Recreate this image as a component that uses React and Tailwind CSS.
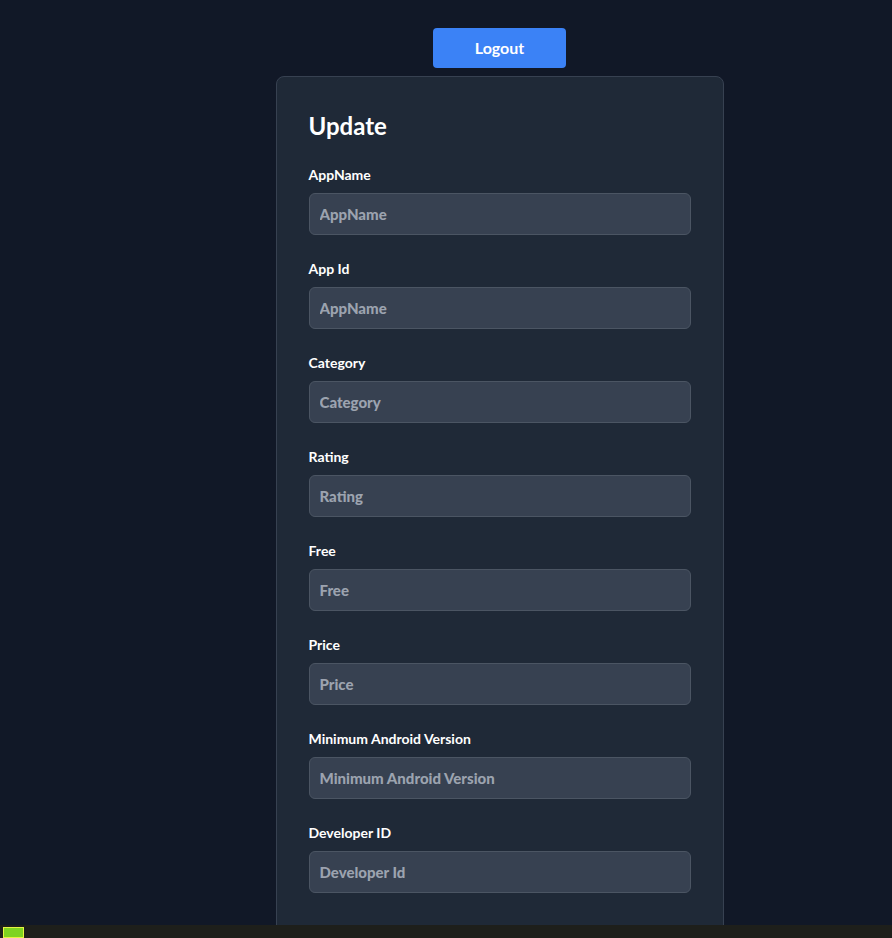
import React from 'react';

const fields = [
    { label: 'AppName', placeholder: 'AppName' },
    { label: 'App Id', placeholder: 'AppName' },
    { label: 'Category', placeholder: 'Category' },
    { label: 'Rating', placeholder: 'Rating' },
    { label: 'Free', placeholder: 'Free' },
    { label: 'Price', placeholder: 'Price' },
    { label: 'Minimum Android Version', placeholder: 'Minimum Android Version' },
    { label: 'Developer ID', placeholder: 'Developer Id' },
];

const App = () => {
    return (
        <div className="min-h-screen bg-[#111827] flex flex-col items-center pt-7 pl-[107px] font-['Lato',sans-serif]">
            <button className="w-[133px] h-10 bg-[#3b82f6] text-white font-bold rounded mb-2">
                Logout
            </button>
            <div className="w-[448px] bg-[#1f2937] border border-[#374151] rounded-lg px-8 pt-8 pb-12">
                <h2 className="text-2xl font-bold text-white mb-6 pt-0.5 leading-[30px]">Update</h2>
                <form className="flex flex-col gap-6">
                    {fields.map((f) => (
                        <div key={f.label}>
                            <label className="block text-sm font-bold text-white mb-2">{f.label}</label>
                            <input
                                type="text"
                                placeholder={f.placeholder}
                                className="w-full h-[42px] px-[10px] bg-[#374151] border border-[#4b5563] rounded-md text-[15px] font-black text-white placeholder:text-[#9ca3af] outline-none"
                            />
                        </div>
                    ))}
                </form>
            </div>
            <div className="fixed bottom-0 left-0 right-0 h-[13px] bg-[#1e1f1b]">
                <div className="ml-[3px] mt-[2px] w-[21px] h-[11px] bg-[#7ed321] border border-[#e6f542]" />
            </div>
        </div>
    );
};

export default App;
